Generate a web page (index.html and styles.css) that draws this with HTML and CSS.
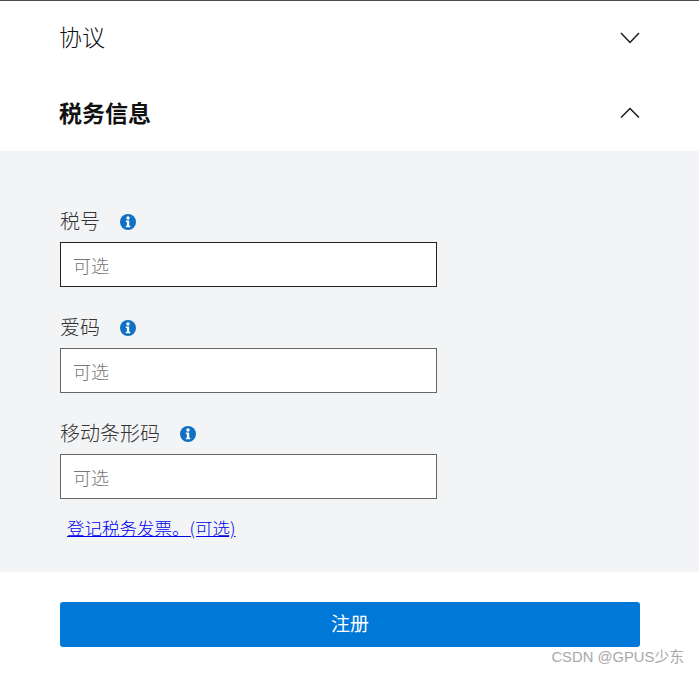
FILE: index.html
```html
<!DOCTYPE html>
<html lang="zh-CN">
<head>
  <meta charset="UTF-8">
  <title>税务信息</title>
  <link rel="stylesheet" href="styles.css">
</head>
<body>
<div class="page">
  <div class="section-head">
    <span class="section-title">协议</span>
    <svg class="chevron" viewBox="0 0 20 12" width="20" height="12" fill="none" stroke="#1b1b1b" stroke-width="1.5"><path d="M1 1l9 9.5 9-9.5"></path></svg>
  </div>
  <div class="section-head section-open">
    <span class="section-title section-title-bold">税务信息</span>
    <svg class="chevron" viewBox="0 0 20 12" width="20" height="12" fill="none" stroke="#1b1b1b" stroke-width="1.5"><path d="M1 10.5l9-9 9 9"></path></svg>
  </div>
  <div class="panel">
    <div class="field">
      <div class="field-label">税号
        <svg class="info" viewBox="0 0 16 16" width="16" height="16"><circle cx="8" cy="8" r="8" fill="#0f70c4"></circle><circle cx="8" cy="4" r="1.7" fill="#fff"></circle><path d="M5.8 6.6h3.4v5.2h1.1v1.4H5.8v-1.4h1.1V8H5.8z" fill="#fff"></path></svg>
      </div>
      <input class="field-input field-input-focus" type="text" placeholder="可选">
    </div>
    <div class="field">
      <div class="field-label">爱码
        <svg class="info" viewBox="0 0 16 16" width="16" height="16"><circle cx="8" cy="8" r="8" fill="#0f70c4"></circle><circle cx="8" cy="4" r="1.7" fill="#fff"></circle><path d="M5.8 6.6h3.4v5.2h1.1v1.4H5.8v-1.4h1.1V8H5.8z" fill="#fff"></path></svg>
      </div>
      <input class="field-input" type="text" placeholder="可选">
    </div>
    <div class="field">
      <div class="field-label">移动条形码
        <svg class="info" viewBox="0 0 16 16" width="16" height="16"><circle cx="8" cy="8" r="8" fill="#0f70c4"></circle><circle cx="8" cy="4" r="1.7" fill="#fff"></circle><path d="M5.8 6.6h3.4v5.2h1.1v1.4H5.8v-1.4h1.1V8H5.8z" fill="#fff"></path></svg>
      </div>
      <input class="field-input" type="text" placeholder="可选">
    </div>
    <a class="panel-link" href="#">登记税务发票。(可选)</a>
  </div>
  <div class="footer">
    <button class="submit-btn">注册</button>
  </div>
  <div class="watermark">CSDN @GPUS少东</div>
</div>
</body>
</html>
```

FILE: styles.css
```css
html, body {
  margin: 0;
  height: 100%;
  background: #ffffff;
}

body {
  font-family: "Noto Sans CJK SC", "Liberation Sans", sans-serif;
  color: #323130;
  overflow: hidden;
}

.page {
  position: relative;
  height: 675px;
  box-sizing: border-box;
  border-top: 1px solid #4a4a52;
}

/* Sezioni */
.section-head {
  display: flex;
  align-items: center;
  justify-content: space-between;
  height: 75px;
  padding: 0 59px 0 59px;
}

.section-title {
  padding-bottom: 6px;
  font-size: 23px;
  font-weight: 300;
  color: #111111;
}

.section-title-bold {
  padding-bottom: 4px;
  font-weight: 700;
}

.chevron {
  margin-bottom: 2px;
}

/* Pannello */
.panel {
  display: flex;
  flex-direction: column;
  height: 421px;
  box-sizing: border-box;
  padding: 55px 60px 0;
  background: #f3f4f6;
}

.field {
  display: flex;
  flex-direction: column;
  margin-bottom: 25px;
}

.field-label {
  display: flex;
  align-items: center;
  height: 30px;
  margin-bottom: 6px;
  font-size: 20px;
  font-weight: 300;
  line-height: 30px;
  color: #333333;
}

.info {
  margin: 1px 0 0 20px;
}

.field-input {
  width: 377px;
  height: 45px;
  box-sizing: border-box;
  padding: 0 12px;
  border: 1px solid #666666;
  background: #ffffff;
  font-family: inherit;
  font-size: 18px;
  font-weight: 300;
  border-radius: 0;
}

.field-input-focus {
  border-color: #222222;
}

.field-input::placeholder {
  color: #767676;
  opacity: 1;
}

.panel-link {
  margin: -10px 0 0 7px;
  font-size: 17.5px;
  font-weight: 300;
  line-height: 27px;
  color: #0000ee;
}

/* Footer */
.footer {
  padding: 30px 59px 0 60px;
}

.submit-btn {
  display: block;
  width: 100%;
  height: 45px;
  padding: 0 0 4px;
  border: 0;
  border-radius: 3px;
  background: #0078d7;
  color: #ffffff;
  font-family: inherit;
  font-size: 19px;
}

.watermark {
  position: absolute;
  right: 15px;
  top: 646px;
  font-family: "Liberation Sans", "Noto Sans CJK SC", sans-serif;
  font-size: 14.8px;
  line-height: 20px;
  color: #a8a8a8;
}
```
